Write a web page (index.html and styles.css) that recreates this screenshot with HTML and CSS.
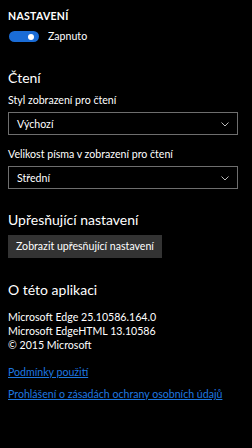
FILE: index.html
```html
<!DOCTYPE html>
<html lang="cs">
<head>
<meta charset="utf-8">
<link rel="stylesheet" href="styles.css">
</head>
<body>
<div class="page">
  <div class="caps">NASTAVENÍ</div>
  <div class="toggle-row">
    <span class="toggle"><span class="knob"></span></span>
    <span class="toggle-label">Zapnuto</span>
  </div>

  <h2 class="heading h-read">Čtení</h2>
  <div class="label">Styl zobrazení pro čtení</div>
  <div class="select">
    <span>Výchozí</span>
    <svg class="chev" width="8" height="5" viewBox="0 0 8 5"><path d="M0.5 0.5 L4 4 L7.5 0.5" fill="none" stroke="#bbb" stroke-width="1"/></svg>
  </div>
  <div class="label">Velikost písma v zobrazení pro čtení</div>
  <div class="select">
    <span>Střední</span>
    <svg class="chev" width="8" height="5" viewBox="0 0 8 5"><path d="M0.5 0.5 L4 4 L7.5 0.5" fill="none" stroke="#bbb" stroke-width="1"/></svg>
  </div>

  <h2 class="heading h-adv">Upřesňující nastavení</h2>
  <div class="btn">Zobrazit upřesňující nastavení</div>

  <h2 class="heading h-about">O této aplikaci</h2>
  <div class="info">
    <div>Microsoft Edge 25.10586.164.0</div>
    <div>Microsoft EdgeHTML 13.10586</div>
    <div>© 2015 Microsoft</div>
  </div>

  <div class="links">
    <a class="link" href="#">Podmínky použití</a>
    <a class="link" href="#">Prohlášení o zásadách ochrany osobních údajů</a>
  </div>
</div>
</body>
</html>
```
FILE: styles.css
```css
html, body {
  margin: 0;
  padding: 0;
  background: #000;
}
body {
  font-family: "Lato", "Open Sans", sans-serif;
  color: #fff;
  width: 252px;
  height: 448px;
  overflow: hidden;
}
.page {
  padding: 10px 8px 0 8px;
}
.caps {
  font-size: 10.5px;
  font-weight: 700;
  line-height: 12px;
  letter-spacing: 0.3px;
}
.toggle-row {
  display: flex;
  align-items: center;
  margin-top: 9px;
  height: 11px;
}
.toggle {
  position: relative;
  width: 30px;
  height: 11px;
  border-radius: 6px;
  background: #1a6cd6;
  margin-left: 1px;
}
.knob {
  position: absolute;
  right: 5px;
  top: 2.5px;
  width: 6px;
  height: 6px;
  border-radius: 50%;
  background: #fff;
}
.toggle-label {
  margin-left: 9px;
  font-size: 10.6px;
  line-height: 11px;
}
.heading {
  margin: 0;
  font-weight: 400;
  font-size: 14px;
  line-height: 18px;
}
.h-read { margin-top: 27px; }
.label {
  font-size: 10.6px;
  line-height: 14px;
  margin-top: 6px;
}
.select {
  margin-top: 5px;
  height: 21px;
  border: 1px solid #6e6e6e;
  display: flex;
  align-items: center;
  justify-content: space-between;
  padding: 0 8px 0 8px;
  font-size: 10.6px;
  width: 212px;
}
.select + .label { margin-top: 12px; }
.chev { margin-top: 1px; }
.h-adv { margin-top: 22px; }
.btn {
  margin-top: 6px;
  display: inline-block;
  background: #333;
  font-size: 10.6px;
  line-height: 23px;
  padding: 0 8px;
}
.h-about { margin-top: 23px; }
.info {
  margin-top: 11px;
  font-size: 10.6px;
  line-height: 14px;
}
.links {
  display: flex;
  flex-direction: column;
  align-items: flex-start;
  margin-top: 13px;
  gap: 8px;
}
.link {
  color: #1e78e0;
  font-size: 10.6px;
  line-height: 14px;
  text-decoration: underline;
}
```
